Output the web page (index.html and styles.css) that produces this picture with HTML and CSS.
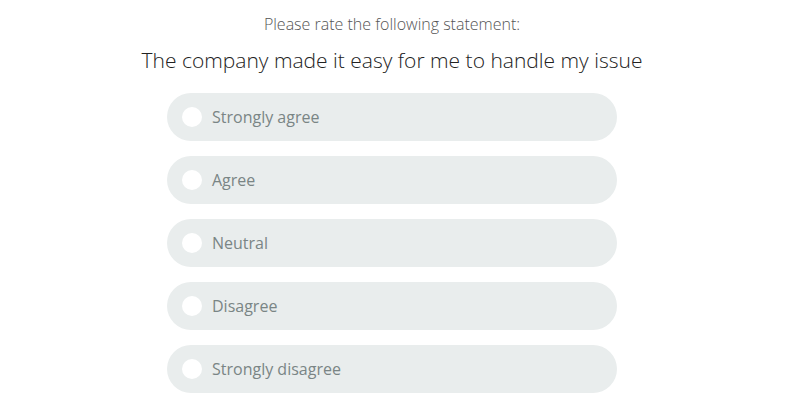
FILE: index.html
```html
<!DOCTYPE html>
<html>
<head>
<meta charset="utf-8">
<link rel="stylesheet" href="styles.css">
</head>
<body>
<div class="survey">
  <p class="prompt">Please rate the following statement:</p>
  <h1 class="statement">The company made it easy for me to handle my issue</h1>
  <ul class="options">
    <li class="option"><span class="radio"></span><span class="label">Strongly agree</span></li>
    <li class="option"><span class="radio"></span><span class="label">Agree</span></li>
    <li class="option"><span class="radio"></span><span class="label">Neutral</span></li>
    <li class="option"><span class="radio"></span><span class="label">Disagree</span></li>
    <li class="option"><span class="radio"></span><span class="label">Strongly disagree</span></li>
  </ul>
</div>
</body>
</html>
```
FILE: styles.css
```css
html, body {
  margin: 0;
  padding: 0;
  background: #ffffff;
}
body {
  font-family: "Open Sans", "Liberation Sans", sans-serif;
}
.survey {
  width: 784px;
  display: flex;
  flex-direction: column;
  align-items: center;
  padding-top: 13px;
}
.prompt {
  margin: 0;
  font-size: 16px;
  line-height: 22px;
  font-weight: 300;
  color: #555555;
}
.statement {
  margin: 11px 0 0 0;
  font-size: 21px;
  line-height: 28px;
  font-weight: 300;
  color: #222222;
}
.options {
  list-style: none;
  margin: 19px 0 0 0;
  padding: 0;
  display: flex;
  flex-direction: column;
  gap: 15px;
}
.option {
  width: 450px;
  height: 48px;
  box-sizing: border-box;
  background: #e9eded;
  border-radius: 24px;
  display: flex;
  align-items: center;
  padding-left: 15px;
  gap: 10px;
}
.radio {
  width: 20px;
  height: 20px;
  border-radius: 50%;
  background: #ffffff;
  flex: none;
}
.label {
  font-size: 16px;
  color: #7a8585;
}
```
